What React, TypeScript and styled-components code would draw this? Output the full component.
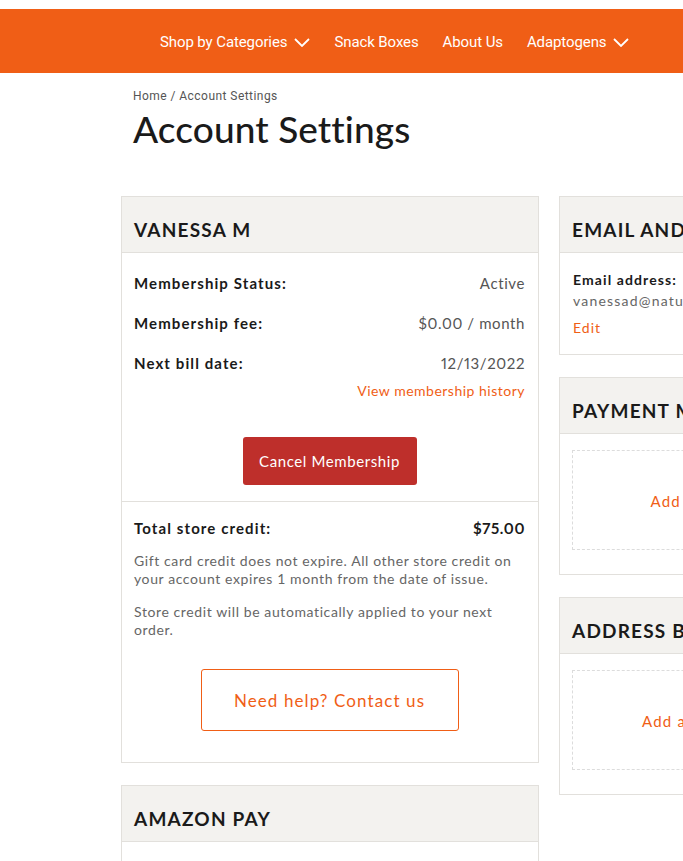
import React from "react";
import styled, { createGlobalStyle } from "styled-components";

const GlobalStyle = createGlobalStyle`
  html, body { margin: 0; padding: 0; overflow: hidden; background: #fff; }
  body { font-family: Lato, "Open Sans", Arial, sans-serif; color: #1a1a1a; }
  * { box-sizing: border-box; }
`;

const Page = styled.div`
  width: 1100px;
  padding-top: 9px;
`;

const NavBar = styled.nav`
  height: 64px;
  background: #f05e16;
  display: flex;
  align-items: center;
  padding: 2px 0 0 160px;
  gap: 24px;
`;

const NavItem = styled.a`
  display: flex;
  align-items: center;
  gap: 7px;
  color: #fff;
  font-family: Roboto, Arial, sans-serif;
  font-size: 15px;
  letter-spacing: -0.1px;
  text-decoration: none;
`;

const Chevron = () => (
  <svg width="16" height="9" viewBox="0 0 16 9" fill="none">
    <polyline points="1,1 8,8 15,1" stroke="#fff" strokeWidth="1.8" strokeLinejoin="miter" />
  </svg>
);

const Main = styled.main`
  padding-left: 121px;
`;

const Heading = styled.header`
  padding: 15px 0 0 12px;
`;

const Breadcrumb = styled.div`
  font-family: Roboto, Arial, sans-serif;
  font-size: 12px;
  letter-spacing: 0.45px;
  color: #555;
  line-height: 16px;
`;

const Title = styled.h1`
  margin: 4px 0 0;
  font-size: 37px;
  font-weight: 500;
  letter-spacing: 0.1px;
  line-height: 42px;
  color: #1a1a1a;
`;

const Columns = styled.div`
  display: flex;
  gap: 20px;
  margin-top: 46px;
  align-items: flex-start;
`;

const Column = styled.div`
  width: 418px;
  flex: none;
  display: flex;
  flex-direction: column;
  gap: 22px;
`;

const Card = styled.section`
  border: 1px solid #e2e0dc;
  background: #fff;
`;

const CardHeader = styled.h2`
  margin: 0;
  height: 56px;
  background: #f3f2ef;
  border-bottom: 1px solid #e2e0dc;
  display: flex;
  align-items: center;
  padding: 9px 12px 0;
  font-size: 19px;
  font-weight: 700;
  letter-spacing: 1.2px;
  color: #1a1a1a;
  white-space: nowrap;
`;

const Section = styled.div<{ $pt: number; $pb: number; $pl?: number; $divider?: boolean }>`
  padding: ${(p) => p.$pt}px 13px ${(p) => p.$pb}px ${(p) => p.$pl ?? 12}px;
  border-top: ${(p) => (p.$divider ? "1px solid #e2e0dc" : "none")};
  display: flex;
  flex-direction: column;
`;

const Rows = styled.div`
  display: flex;
  flex-direction: column;
  gap: 16px;
`;

const Row = styled.div`
  display: flex;
  justify-content: space-between;
  align-items: center;
  height: 24px;
`;

const Label = styled.span`
  font-size: 15px;
  font-weight: 700;
  letter-spacing: 1.1px;
  color: #1a1a1a;
`;

const Value = styled.span<{ $bold?: boolean }>`
  font-size: 15px;
  font-weight: ${(p) => (p.$bold ? 700 : 400)};
  letter-spacing: 0.6px;
  font-variant-numeric: proportional-nums;
  color: ${(p) => (p.$bold ? "#1a1a1a" : "#555")};
`;

const RightLink = styled.a`
  align-self: flex-end;
  margin-top: 6px;
  font-size: 14px;
  line-height: 20px;
  color: #f05e16;
  letter-spacing: 0.5px;
  text-decoration: none;
`;

const CancelButton = styled.button`
  align-self: center;
  margin-top: 36px;
  width: 174px;
  height: 48px;
  border: none;
  border-radius: 3px;
  background: #be2f2b;
  color: #fff;
  font-family: inherit;
  font-size: 15px;
  letter-spacing: 0.6px;
`;

const Paragraph = styled.p<{ $mt: number }>`
  margin: ${(p) => p.$mt}px 0 0;
  font-size: 14px;
  line-height: 18px;
  letter-spacing: 0.6px;
  color: #666;
`;

const OutlineButton = styled.button`
  align-self: center;
  margin-top: 30px;
  width: 258px;
  height: 62px;
  border: 1px solid #f05e16;
  border-radius: 3px;
  background: #fff;
  color: #f05e16;
  font-family: inherit;
  font-size: 17px;
  letter-spacing: 1.1px;
`;

const FieldLabel = styled.div`
  font-size: 14px;
  font-weight: 700;
  letter-spacing: 1.1px;
  line-height: 20px;
  color: #1a1a1a;
  white-space: nowrap;
`;

const FieldValue = styled.div`
  margin-top: 1px;
  font-size: 14px;
  line-height: 20px;
  letter-spacing: 1.2px;
  color: #666;
  white-space: nowrap;
`;

const EditLink = styled.a`
  margin-top: 7px;
  font-size: 14px;
  line-height: 20px;
  letter-spacing: 1px;
  color: #f05e16;
  text-decoration: none;
`;

const DashedBox = styled.div`
  height: 100px;
  border: 1px dashed #dcdcdc;
  display: flex;
  align-items: center;
  justify-content: center;
  font-size: 15px;
  letter-spacing: 1.2px;
  color: #f05e16;
  padding-top: 1px;
  white-space: nowrap;
`;

export default function App() {
  return (
    <>
      <GlobalStyle />
      <Page>
        <NavBar>
          <NavItem>
            Shop by Categories <Chevron />
          </NavItem>
          <NavItem>Snack Boxes</NavItem>
          <NavItem>About Us</NavItem>
          <NavItem>
            Adaptogens <Chevron />
          </NavItem>
        </NavBar>
        <Main>
          <Heading>
            <Breadcrumb>Home / Account Settings</Breadcrumb>
            <Title>Account Settings</Title>
          </Heading>
          <Columns>
            <Column>
              <Card>
                <CardHeader>VANESSA M</CardHeader>
                <Section $pt={18} $pb={16}>
                  <Rows>
                    <Row>
                      <Label>Membership Status:</Label>
                      <Value>Active</Value>
                    </Row>
                    <Row>
                      <Label>Membership fee:</Label>
                      <Value>$0.00 / month</Value>
                    </Row>
                    <Row>
                      <Label>Next bill date:</Label>
                      <Value>12/13/2022</Value>
                    </Row>
                  </Rows>
                  <RightLink>View membership history</RightLink>
                  <CancelButton>Cancel Membership</CancelButton>
                </Section>
                <Section $pt={14} $pb={31} $divider>
                  <Row>
                    <Label>Total store credit:</Label>
                    <Value $bold>$75.00</Value>
                  </Row>
                  <Paragraph $mt={12}>
                    Gift card credit does not expire. All other store credit on your account
                    expires 1 month from the date of issue.
                  </Paragraph>
                  <Paragraph $mt={15}>
                    Store credit will be automatically applied to your next order.
                  </Paragraph>
                  <OutlineButton>Need help? Contact us</OutlineButton>
                </Section>
              </Card>
              <Card>
                <CardHeader>AMAZON PAY</CardHeader>
                <Section $pt={18} $pb={18}>
                  <FieldValue>&nbsp;</FieldValue>
                </Section>
              </Card>
            </Column>
            <Column>
              <Card>
                <CardHeader>EMAIL AND PASSWORD</CardHeader>
                <Section $pt={17} $pb={16} $pl={13}>
                  <FieldLabel>Email address:</FieldLabel>
                  <FieldValue>vanessad@naturebox.com</FieldValue>
                  <EditLink>Edit</EditLink>
                </Section>
              </Card>
              <Card>
                <CardHeader>PAYMENT METHODS</CardHeader>
                <Section $pt={16} $pb={24}>
                  <DashedBox>Add a new credit or debit card</DashedBox>
                </Section>
              </Card>
              <Card>
                <CardHeader>ADDRESS BOOK</CardHeader>
                <Section $pt={16} $pb={24}>
                  <DashedBox>Add a new address for deliveries</DashedBox>
                </Section>
              </Card>
            </Column>
          </Columns>
        </Main>
      </Page>
    </>
  );
}
